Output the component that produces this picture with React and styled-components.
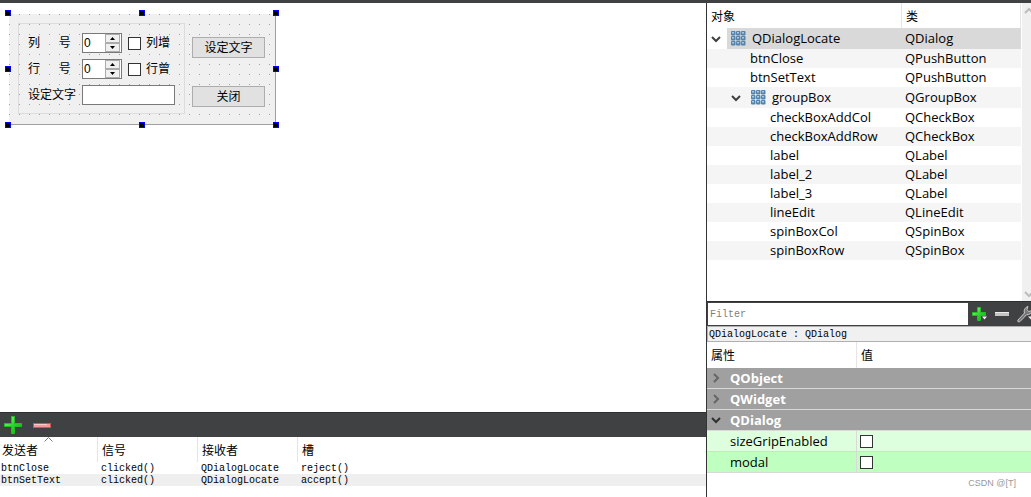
import React, { useState } from "react";
import styled, { createGlobalStyle } from "styled-components";

const uiFont = `"Open Sans", "Noto Sans CJK SC", sans-serif`;
const formFont = `"Liberation Sans", "Noto Sans CJK SC", sans-serif`;
const monoFont = `"Liberation Mono", "Noto Sans CJK SC", monospace`;

const objects = [
  { name: "QDialogLocate", type: "QDialog", depth: 0, container: true },
  { name: "btnClose", type: "QPushButton", depth: 1 },
  { name: "btnSetText", type: "QPushButton", depth: 1 },
  { name: "groupBox", type: "QGroupBox", depth: 1, container: true },
  { name: "checkBoxAddCol", type: "QCheckBox", depth: 2 },
  { name: "checkBoxAddRow", type: "QCheckBox", depth: 2 },
  { name: "label", type: "QLabel", depth: 2 },
  { name: "label_2", type: "QLabel", depth: 2 },
  { name: "label_3", type: "QLabel", depth: 2 },
  { name: "lineEdit", type: "QLineEdit", depth: 2 },
  { name: "spinBoxCol", type: "QSpinBox", depth: 2 },
  { name: "spinBoxRow", type: "QSpinBox", depth: 2 },
];

const connections = [
  ["btnClose", "clicked()", "QDialogLocate", "reject()"],
  ["btnSetText", "clicked()", "QDialogLocate", "accept()"],
];

function Chevron({ open, color = "#404040" }) {
  return (
    <svg width="10" height="10" viewBox="0 0 10 10" fill="none" stroke={color} strokeWidth="2">
      {open ? <path d="M1 3 L5 7 L9 3" /> : <path d="M3 1 L7 5 L3 9" />}
    </svg>
  );
}

function PlusIcon({ menu }) {
  return (
    <svg width="20" height="20" viewBox="0 0 20 20">
      <defs>
        <linearGradient id="plusFill" x1="0" y1="0" x2="1" y2="1">
          <stop offset="0" stopColor="#a6f5a0" />
          <stop offset="0.5" stopColor="#2fd52f" />
          <stop offset="1" stopColor="#00b400" />
        </linearGradient>
      </defs>
      {menu ? (
        <>
          <path d="M8.500 3.500h3v5h5v3h-5v5h-3v-5h-5v-3h5z" fill="url(#plusFill)" stroke="#22c022" />
          <path d="M13 12.500h5l-2.500 3z" fill="#f4f4f4" />
        </>
      ) : (
        <path d="M8.500 1.500h3v7h7v3h-7v7h-3v-7h-7v-3h7z" fill="url(#plusFill)" stroke="#22c022" />
      )}
    </svg>
  );
}

function MinusIcon({ red }) {
  return (
    <svg width="20" height="20" viewBox="0 0 20 20">
      {red ? (
        <>
          <rect x="1.500" y="8.500" width="17" height="4" fill="#f79a9a" stroke="#d94f55" />
          <path d="M2 9.500h13" stroke="#fcc9c9" />
        </>
      ) : (
        <>
          <rect x="3" y="8" width="14" height="4" fill="#c4c4c4" />
          <path d="M3 8.500h14" stroke="#ececec" />
        </>
      )}
    </svg>
  );
}

function WrenchIcon() {
  return (
    <svg width="20" height="20" viewBox="0 0 20 20">
      <path
        d="M3 16 L9.500 9 C8.500 6 10 3.500 13 2.500 L12 5.500 L13.500 7.500 L17 6.500 C16.500 9.500 14.500 10.800 11.500 10.800 L5 17.500 C3.500 18.500 2 17.500 3 16z"
        fill="#777"
        stroke="#c8c8c8"
      />
      <path d="M13 12.500h6l-3 3z" fill="#f4f4f4" />
    </svg>
  );
}

function LayoutIcon() {
  const cells = [0, 5, 10];
  return (
    <svg width="15" height="15" viewBox="0 0 15 15">
      {cells.map((y) =>
        cells.map((x) => (
          <g key={`${x}-${y}`}>
            <rect x={x} y={y} width="4.500" height="4.500" rx="1" fill="#5583ab" />
            <rect x={x + 1} y={y + 1} width="2" height="1.500" fill="#a9cbe6" />
          </g>
        ))
      )}
    </svg>
  );
}

function SpinField({ label, id }) {
  const [value, setValue] = useState(0);
  return (
    <>
      <FormLabel htmlFor={id}>{label}</FormLabel>
      <SpinBox>
        <input id={id} value={value} onChange={(e) => setValue(Number(e.target.value) || 0)} />
        <SpinButtons>
          <button type="button" aria-label="+" onClick={() => setValue(value + 1)}>
            <svg width="5" height="3" viewBox="0 0 5 3"><path d="M0 3L2.500 0L5 3z" /></svg>
          </button>
          <button type="button" aria-label="-" onClick={() => setValue(Math.max(0, value - 1))}>
            <svg width="5" height="3" viewBox="0 0 5 3"><path d="M0 0L2.500 3L5 0z" /></svg>
          </button>
        </SpinButtons>
      </SpinBox>
    </>
  );
}

function FormDialog() {
  return (
    <Dialog>
      <GroupBox>
        <SpinField id="spinBoxCol" label={"列\u3000  号"} />
        <CheckLabel><CheckBox type="checkbox" />列增</CheckLabel>
        <SpinField id="spinBoxRow" label={"行\u3000  号"} />
        <CheckLabel><CheckBox type="checkbox" />行曾</CheckLabel>
        <FormLabel htmlFor="lineEdit">设定文字</FormLabel>
        <LineEdit id="lineEdit" />
      </GroupBox>
      <ButtonColumn>
        <PushButton type="button">设定文字</PushButton>
        <PushButton type="button">关闭</PushButton>
      </ButtonColumn>
      <Handles>
        {[0, 1, 2, 3, 4, 5, 6, 7, 8].map((i) => (
          <Handle key={i} $hidden={i === 4} />
        ))}
      </Handles>
    </Dialog>
  );
}

function ConnectionPanel() {
  return (
    <Connections>
      <ToolBar>
        <ToolButton type="button" aria-label="+"><PlusIcon /></ToolButton>
        <ToolButton type="button" aria-label="-"><MinusIcon red /></ToolButton>
      </ToolBar>
      <ConnectionTable>
        <thead>
          <tr>
            <th>
              发送者
              <SortMark width="9" height="5" viewBox="0 0 9 5" fill="none" stroke="#7a7a7a">
                <path d="M0.500 4.500L4.500 0.500L8.500 4.500" />
              </SortMark>
            </th>
            <th>信号</th>
            <th>接收者</th>
            <th>槽</th>
          </tr>
        </thead>
        <tbody>
          {connections.map((row) => (
            <tr key={row[0]}>
              {row.map((cell) => <td key={cell}>{cell}</td>)}
            </tr>
          ))}
        </tbody>
      </ConnectionTable>
    </Connections>
  );
}

function ObjectInspector() {
  return (
    <Inspector>
      <TreeTable>
        <thead>
          <tr>
            <th>对象</th>
            <th>类</th>
          </tr>
        </thead>
        <tbody>
          {objects.map((item, index) => (
            <TreeRow key={item.name} $container={item.container} $selected={index === 0}>
              <td>
                <TreeCell $depth={item.depth}>
                  {item.container && <Branch><Chevron open /></Branch>}
                  <TreeName $container={item.container} $selected={index === 0}>
                    {item.container && <LayoutIcon />}
                    {item.name}
                  </TreeName>
                </TreeCell>
              </td>
              <td>{item.type}</td>
            </TreeRow>
          ))}
        </tbody>
      </TreeTable>
      <ScrollBar>
        <svg width="9" height="9" viewBox="0 0 9 9" fill="none" stroke="#bdbdbd" strokeWidth="2"><path d="M3 7L7 3L11 7" /></svg>
        <svg width="9" height="9" viewBox="0 0 9 9" fill="none" stroke="#bdbdbd" strokeWidth="2"><path d="M3 3L7 7L11 3" /></svg>
      </ScrollBar>
    </Inspector>
  );
}

function PropertyEditor() {
  return (
    <Properties>
      <FilterBar>
        <FilterInput placeholder="Filter" aria-label="Filter" />
        <ToolButton type="button" aria-label="+"><PlusIcon menu /></ToolButton>
        <ToolButton type="button" aria-label="-"><MinusIcon /></ToolButton>
        <ToolButton type="button" aria-label="Filter"><WrenchIcon /></ToolButton>
      </FilterBar>
      <ObjectTitle>QDialogLocate : QDialog</ObjectTitle>
      <PropertyTable>
        <thead>
          <tr>
            <th>属性</th>
            <th>值</th>
          </tr>
        </thead>
        <tbody>
          {["QObject", "QWidget", "QDialog"].map((group) => (
            <GroupRow key={group}>
              <td colSpan="2">
                <GroupToggle type="button">
                  <Chevron open={group === "QDialog"} color={group === "QDialog" ? "#303030" : "#666"} />
                  {group}
                </GroupToggle>
              </td>
            </GroupRow>
          ))}
          <PropertyRow $color="#ddffdd">
            <td><label htmlFor="sizeGrip">sizeGripEnabled</label></td>
            <td><CheckBox id="sizeGrip" type="checkbox" /></td>
          </PropertyRow>
          <PropertyRow $color="#bfffbf">
            <td><label htmlFor="modal">modal</label></td>
            <td><CheckBox id="modal" type="checkbox" /></td>
          </PropertyRow>
        </tbody>
      </PropertyTable>
      <Watermark>CSDN @[T]</Watermark>
    </Properties>
  );
}

function App() {
  return (
    <>
      <GlobalStyle />
      <Window>
        <Workspace>
          <Canvas>
            <FormDialog />
          </Canvas>
          <ConnectionPanel />
        </Workspace>
        <Sidebar>
          <ObjectInspector />
          <PropertyEditor />
        </Sidebar>
      </Window>
    </>
  );
}

const GlobalStyle = createGlobalStyle`
  *, *::before, *::after {
    box-sizing: border-box;
  }
  body {
    margin: 0;
    background: #fff;
    color: #000;
    font-family: ${uiFont};
    font-size: 13px;
  }
  button, input {
    margin: 0;
    padding: 0;
    font: inherit;
    color: inherit;
  }
  svg {
    display: block;
    flex-shrink: 0;
  }
  table {
    width: 100%;
    border-collapse: separate;
    border-spacing: 0;
    table-layout: fixed;
  }
  th, td {
    padding: 0;
    text-align: left;
    font-weight: normal;
    white-space: nowrap;
  }
`;

const Window = styled.div`
  display: grid;
  grid-template-columns: minmax(0, 1fr) 325px;
  min-height: 100vh;
  border-top: 3px solid #404142;
`;

const Workspace = styled.main`
  display: flex;
  flex-direction: column;
`;

const Canvas = styled.div`
  flex: 1;
  display: flex;
  align-items: flex-start;
  padding: 11px 9px;
`;

const Dialog = styled.form`
  position: relative;
  display: flex;
  gap: 7px;
  padding: 9px 10px 10px 9px;
  border-right: 1px solid #a0a0a0;
  border-bottom: 1px solid #a0a0a0;
  background: #f0f0f0 radial-gradient(circle at 0 0, #a0a0a0 1px, transparent 1px) 0 0 / 10px 10px;
  font: 12px/16px ${formFont};
`;

const GroupBox = styled.div`
  display: grid;
  grid-template-columns: 48px 40px 47px;
  gap: 6px;
  align-items: center;
  padding: 9px 9px 8px;
  border: 1px solid #dcdcdc;
`;

const FormLabel = styled.label`
  white-space: pre;
  line-height: 20px;
`;

const SpinBox = styled.div`
  display: flex;
  height: 20px;
  border: 1px solid #7a7a7a;
  background: #fff;
  input {
    flex: 1;
    min-width: 0;
    padding-left: 1px;
    border: 0;
    outline: 0;
    background: none;
  }
`;

const SpinButtons = styled.div`
  display: flex;
  flex-direction: column;
  width: 15px;
  margin-right: 1px;
  button {
    flex: 1;
    display: flex;
    align-items: center;
    justify-content: center;
    border: 1px solid #acacac;
    background: #f0f0f0;
  }
`;

const CheckBox = styled.input`
  appearance: none;
  display: block;
  flex-shrink: 0;
  width: 13px;
  height: 13px;
  border: 1px solid #333;
  background: #fff;
  &:checked {
    box-shadow: inset 0 0 0 2px #fff;
    background: #333;
  }
`;

const CheckLabel = styled.label`
  display: flex;
  align-items: center;
  gap: 5px;
  line-height: 20px;
  white-space: nowrap;
`;

const LineEdit = styled.input`
  grid-column: 2 / -1;
  width: 100%;
  height: 20px;
  border: 1px solid #7a7a7a;
  background: #fff;
`;

const ButtonColumn = styled.div`
  display: flex;
  flex-direction: column;
  justify-content: space-between;
  width: 73px;
  padding: 14px 0 7px;
`;

const PushButton = styled.button`
  height: 21px;
  padding-top: 1px;
  border: 1px solid #adadad;
  background: #e1e1e1;
`;

/* selection frame, lies over the edges of the form */
const Handles = styled.div`
  position: absolute;
  top: -4px;
  left: -4px;
  right: -4px;
  bottom: -4px;
  display: grid;
  grid-template-columns: repeat(3, 6px);
  justify-content: space-between;
  align-content: space-between;
  pointer-events: none;
`;

const Handle = styled.span`
  width: 6px;
  height: 6px;
  border: 1px solid #00f;
  background: #000;
  visibility: ${(props) => (props.$hidden ? "hidden" : "visible")};
`;

const Connections = styled.section`
  min-height: 85px;
`;

const ToolBar = styled.div`
  display: flex;
  align-items: center;
  gap: 9px;
  height: 25px;
  padding-left: 3px;
  border-top: 1px solid #2e2f30;
  background: #404142;
`;

const ToolButton = styled.button`
  flex-shrink: 0;
  border: 0;
  background: none;
`;

const ConnectionTable = styled.table`
  th {
    position: relative;
    width: 100px;
    height: 25px;
    padding-left: 4px;
    border-right: 1px solid #e5e5e5;
    font-size: 12px;
  }
  th:first-child {
    width: 98px;
    padding-left: 2px;
  }
  th:last-child {
    width: auto;
    border-right: 0;
  }
  td {
    height: 12px;
    padding: 1px 0 0 3px;
    font: 10px/11px ${monoFont};
  }
  td:first-child {
    padding-left: 1px;
  }
  tbody tr:nth-child(even) {
    background: #efefef;
  }
`;

const SortMark = styled.svg`
  position: absolute;
  top: 0;
  left: 44px;
`;

const Sidebar = styled.aside`
  display: flex;
  flex-direction: column;
  min-width: 0;
  border-left: 1px solid #333435;
`;

const Inspector = styled.section`
  flex: 1;
  display: flex;
  align-items: stretch;
  overflow: hidden;
`;

const TreeTable = styled.table`
  flex: 1;
  align-self: flex-start;
  margin-right: 1px;
  th {
    height: 25px;
    padding-left: 4px;
    border-right: 1px solid #e5e5e5;
    font-size: 12px;
  }
  th:first-child {
    width: 195px;
  }
`;

const TreeRow = styled.tr`
  height: ${(props) => (props.$container ? "21px" : "19px")};
  line-height: 19px;
  &:nth-child(even) {
    background: #f5f5f5;
  }
  td:last-child {
    padding-left: 3px;
    background: ${(props) => (props.$selected ? "#d9d9d9" : "none")};
  }
`;

const TreeCell = styled.div`
  display: flex;
  align-items: stretch;
  padding-left: ${(props) => props.$depth * 20}px;
`;

const Branch = styled.span`
  display: flex;
  align-items: center;
  width: 20px;
  padding-left: 4px;
`;

const TreeName = styled.span`
  flex: 1;
  display: flex;
  align-items: center;
  gap: 6px;
  height: ${(props) => (props.$container ? "21px" : "19px")};
  padding-left: ${(props) => (props.$container ? "4px" : "23px")};
  background: ${(props) => (props.$selected ? "#d9d9d9" : "none")};
`;

const ScrollBar = styled.div`
  display: flex;
  flex-direction: column;
  justify-content: space-between;
  flex-shrink: 0;
  width: 9px;
  padding: 3px 0;
  background: #f0f0f0;
`;

const Properties = styled.section`
  min-width: 0;
`;

const FilterBar = styled.div`
  display: flex;
  align-items: center;
  gap: 3px;
  height: 25px;
  padding-left: 1px;
  border-top: 1px solid #2e2f30;
  background: #404142;
  overflow: hidden;
`;

const FilterInput = styled.input`
  flex: 0 0 calc(100% - 63px);
  min-width: 0;
  height: 22px;
  margin-right: -2px;
  padding-left: 2px;
  border: 0;
  outline: 0;
  background: #fff;
  font: 10px/12px ${monoFont};
  &::placeholder {
    color: #7f7f7f;
    opacity: 1;
  }
`;

const ObjectTitle = styled.div`
  height: 16px;
  padding: 1px 0 0 1px;
  border: 1px solid #b0b0b0;
  border-right: 0;
  background: #f0f0f0;
  font: 10px/14px ${monoFont};
`;

const PropertyTable = styled.table`
  th {
    height: 26px;
    padding-left: 4px;
    font-size: 12px;
  }
  th:first-child {
    width: 150px;
    border-right: 1px solid #e5e5e5;
  }
`;

const GroupRow = styled.tr`
  td {
    height: 21px;
    border-bottom: 1px solid #d9d9d9;
    background: #a0a0a0;
  }
`;

const GroupToggle = styled.button`
  display: flex;
  align-items: center;
  gap: 9px;
  width: 100%;
  height: 20px;
  padding-left: 4px;
  border: 0;
  background: none;
  color: #fff;
  font-weight: bold;
`;

const PropertyRow = styled.tr`
  td {
    height: 21px;
    padding-left: 3px;
    border-bottom: 1px solid #d9d9d9;
    background: ${(props) => props.$color};
    line-height: 20px;
  }
  td:first-child {
    padding-left: 23px;
    border-right: 1px solid #d9d9d9;
  }
`;

const Watermark = styled.div`
  height: 24px;
  padding-right: 15px;
  color: #999;
  font: 9px/20px ${formFont};
  text-align: right;
`;

export default App;
